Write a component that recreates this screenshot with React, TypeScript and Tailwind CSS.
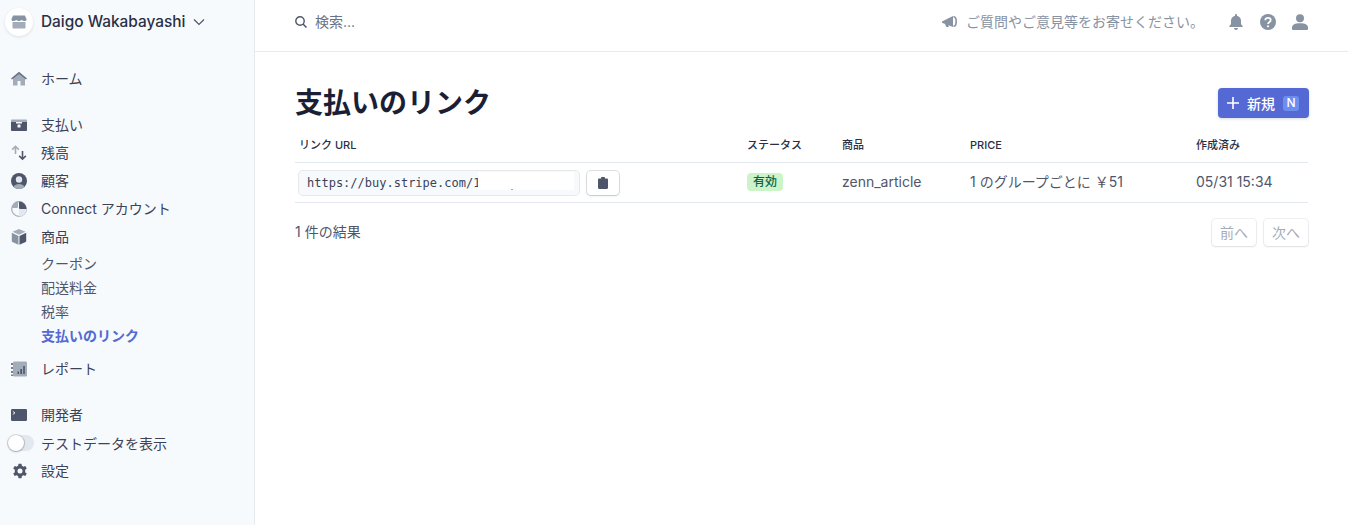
import React from "react";

const font = { fontFamily: '"Inter", "Noto Sans CJK JP", sans-serif' };

function Row({ icon, label, cls = "" }: { icon: React.ReactNode; label: string; cls?: string }) {
  return (
    <div className={`flex h-[28px] items-center ${cls}`}>
      <div className="flex w-[41px] shrink-0 items-center justify-start pl-[11px]">{icon}</div>
      <span className="text-[14px] leading-[20px] text-[#3c4257]">{label}</span>
    </div>
  );
}

function Sub({ label, active }: { label: string; active?: boolean }) {
  return (
    <div className={`flex h-[24px] items-center pl-[41px] text-[14px] ${active ? "font-bold text-[#5469d4]" : "text-[#4f566b]"}`}>
      {label}
    </div>
  );
}

const Home = () => (
  <svg width="16" height="16" viewBox="0 0 16 16"><path fill="#a3acb9" d="M8 2 2 7v7.500h4.500V10h3v4.500H14V7z" /><path fill="#697386" d="M8 .8 0 7.400l1 1.200L8 2.900l7 5.700 1-1.200z" /></svg>
);
const Payments = () => (
  <svg width="16" height="16" viewBox="0 0 16 16"><path fill="#a3acb9" d="M0 3.500C0 3 .4 2.500 1 2.500h14c.6 0 1 .5 1 1V5H0z" /><path fill="#4f566b" d="M0 5h5v1.500h6V5h5v8c0 .6-.4 1-1 1H1c-.6 0-1-.4-1-1z" /><rect fill="#f7fafc" x="6.500" y="7.500" width="3" height="3" rx=".5" /></svg>
);
const Balance = () => (
  <svg width="16" height="16" viewBox="0 0 16 16"><path fill="none" stroke="#a3acb9" strokeWidth="1.600" d="M4.500 9V1.500M1.200 4.600 4.500 1.300l3.300 3.300" /><path fill="none" stroke="#4f566b" strokeWidth="1.600" d="M11.500 6v8M8.200 10.900l3.300 3.300 3.300-3.300" /></svg>
);
const Customers = () => (
  <svg width="16" height="16" viewBox="0 0 16 16"><circle cx="8" cy="8" r="8" fill="#4f566b" /><path fill="#a3acb9" d="M2.600 13.900C3.600 11.900 5.600 11 8 11s4.400.9 5.400 2.900A8 8 0 0 1 8 16a8 8 0 0 1-5.400-2.100z" /><circle cx="8" cy="6.500" r="3.200" fill="#e3e8ee" /></svg>
);
const Connect = () => (
  <svg width="16" height="16" viewBox="0 0 16 16"><circle cx="8" cy="8" r="7.300" fill="#f7fafc" stroke="#a3acb9" strokeWidth="1.200" /><path fill="#e3e8ee" d="M8 8h7.500A7.500 7.500 0 0 1 8 15.500z" /><path fill="#4f566b" d="M8 .5A7.500 7.500 0 0 1 15.500 8H9a1 1 0 0 1-1-1z" /><path fill="#a3acb9" d="M1 7a7.500 7.500 0 0 1 6-6.400V6a1 1 0 0 1-1 1z" /></svg>
);
const Products = () => (
  <svg width="16" height="16" viewBox="0 0 16 16"><path fill="#a3acb9" d="M8 0 1.500 2.800l6.500 3 6.500-3z" /><path fill="#8792a2" d="M.8 3.800 7.500 6.900v8.900L1.400 13c-.4-.2-.6-.5-.6-.9z" /><path fill="#4f566b" d="M15.200 3.800 8.500 6.900v8.900l6.100-2.800c.4-.2.6-.5.6-.9z" /></svg>
);
const Reports = () => (
  <svg width="16" height="16" viewBox="0 0 16 16"><rect x="2" y="0.500" width="14" height="15" rx="1.200" fill="#a3acb9" /><path fill="#4f566b" d="M0 2h2v2H0zM0 6h2v2H0zM0 10h2v2H0zM0 13.500h2v1.500H0z" opacity=".75" /><path fill="#4f566b" d="M6.500 10.500H8V13H6.500zM9.300 8H11v5H9.300zM12.200 5h1.600v8h-1.600z" /></svg>
);
const Dev = () => (
  <svg width="16" height="12" viewBox="0 0 16 12"><rect width="16" height="12" rx="1.200" fill="#4f566b" /><path fill="none" stroke="#e3e8ee" strokeWidth="1" d="M1.800 2.400 4 3.900 1.800 5.400" /></svg>
);
const Gear = () => (
  <svg width="16" height="16" viewBox="0 0 24 24" className="ml-[1px]"><path fill="#4f566b" d="M14.200 1h-4.400l-.6 3.300a8.500 8.500 0 0 0-2 1.200L4 4.400 1.800 8.200l2.500 2.100a8.600 8.600 0 0 0 0 3.400l-2.500 2.100L4 19.600l3.200-1.100a8.500 8.500 0 0 0 2 1.200l.6 3.300h4.400l.6-3.300a8.500 8.500 0 0 0 2-1.200l3.200 1.100 2.200-3.800-2.500-2.100a8.600 8.600 0 0 0 0-3.400l2.500-2.100L20 4.400l-3.200 1.100a8.500 8.500 0 0 0-2-1.200zM12 8.200a3.800 3.800 0 1 1 0 7.600 3.800 3.800 0 0 1 0-7.600z" /></svg>
);

function Sidebar() {
  return (
    <aside className="flex w-[255px] shrink-0 flex-col border-r border-[#e6e9ee] bg-[#f7fafc] pt-[8px]">
      <div className="flex h-[28px] items-center pl-[5px]">
        <div className="flex h-[28px] w-[28px] items-center justify-center rounded-full bg-white shadow-[0_1px_3px_rgba(60,66,87,0.14)]">
          <svg width="16" height="16" viewBox="0 0 16 16"><path fill="#a3acb9" d="M1.500 8h13v5.500c0 .6-.4 1-1 1h-11c-.6 0-1-.4-1-1z" /><path fill="#8792a2" d="M2.500 1.500h11c.3 0 .5.2.6.4L15.500 5v.5C15.500 6.600 14.600 7 13.400 7c-1 0-1.800-.4-2.700-.9C9.800 6.600 9 7 8 7s-1.800-.4-2.700-.9C4.400 6.600 3.600 7 2.600 7 1.400 7 .5 6.600.5 5.500V5L1.900 1.900c.1-.2.300-.4.600-.4z" /></svg>
        </div>
        <span className="ml-[8px] text-[15.4px] font-medium leading-[28px] text-[#2a2f45]">Daigo Wakabayashi</span>
        <svg width="12" height="8" viewBox="0 0 12 8" className="ml-[8px]"><path fill="none" stroke="#4f566b" strokeWidth="1.200" d="M1 1.500 6 6.500l5-5" /></svg>
      </div>
      <Row cls="mt-[29px]" icon={<Home />} label="ホーム" />
      <Row cls="mt-[18px]" icon={<Payments />} label="支払い" />
      <Row icon={<Balance />} label="残高" />
      <Row icon={<Customers />} label="顧客" />
      <Row icon={<Connect />} label="Connect アカウント" />
      <Row icon={<Products />} label="商品" />
      <div>
        <Sub label="クーポン" />
        <Sub label="配送料金" />
        <Sub label="税率" />
        <Sub label="支払いのリンク" active />
      </div>
      <Row cls="mt-[8px]" icon={<Reports />} label="レポート" />
      <Row cls="mt-[18px]" icon={<Dev />} label="開発者" />
      <div className="flex h-[28px] items-center">
        <div className="ml-[8px] h-[16px] w-[26px] rounded-full bg-[#e3e8ee]">
          <div className="h-[16px] w-[16px] rounded-full bg-white shadow-[0_0_0_1px_rgba(60,66,87,0.2),0_1px_2px_rgba(60,66,87,0.3)]" />
        </div>
        <span className="ml-[7px] text-[14px] text-[#3c4257]">テストデータを表示</span>
      </div>
      <Row icon={<Gear />} label="設定" />
    </aside>
  );
}

function TopBar() {
  return (
    <header className="flex h-[52px] shrink-0 items-center border-b border-[#e6e9ee] pl-[40px] pr-[40px] pb-[7px]">
      <svg width="12" height="12" viewBox="0 0 12 12"><circle cx="5" cy="5" r="4.200" fill="none" stroke="#4f566b" strokeWidth="1.400" /><path stroke="#4f566b" strokeWidth="1.500" d="m8 8 3.500 3.500" /></svg>
      <span className="ml-[8px] -translate-y-[1px] text-[14px] text-[#697386]">検索...</span>
      <div className="ml-auto flex items-center">
        <svg width="16" height="14" viewBox="0 0 16 14"><path fill="#8792a2" d="M0 6.500 11 1v11L0 7.800z" /><path fill="#8792a2" d="M3 8.500h3l.8 3.500H4.200z" /><path fill="none" stroke="#8792a2" strokeWidth="1.600" d="M11.500 1.800c3.600 0 3.600 9.400 0 9.400" /></svg>
        <span className="ml-[8px] -translate-y-[1px] text-[14px] text-[#8792a2]">ご質問やご意見等をお寄せください。</span>
        <svg width="16" height="16" viewBox="0 0 16 16" className="ml-[24px]"><path fill="#8792a2" d="M8 0a1 1 0 0 1 1 1v.8c2.300.5 4 2.500 4 4.900V10l1.700 2.300c.2.300 0 .7-.4.700H1.700c-.4 0-.6-.4-.4-.7L3 10V6.700c0-2.400 1.700-4.400 4-4.900V1a1 1 0 0 1 1-1zM6 14h4a2 2 0 0 1-4 0z" /></svg>
        <svg width="16" height="16" viewBox="0 0 16 16" className="ml-[16px]"><circle cx="8" cy="8" r="8" fill="#8792a2" /><path fill="none" stroke="#fff" strokeWidth="1.800" d="M5.300 6.200C5.300 4.700 6.500 3.800 8 3.800s2.700.9 2.700 2.300c0 2.100-2.700 2.100-2.700 3.900" /><circle cx="8" cy="12.300" r="1.100" fill="#fff" /></svg>
        <svg width="16" height="16" viewBox="0 0 16 16" className="ml-[16px]"><circle cx="8" cy="4.200" r="4" fill="#8792a2" /><path fill="#8792a2" d="M0 13.500C0 10.800 3 9.300 8 9.300s8 1.500 8 4.200V15a1 1 0 0 1-1 1H1a1 1 0 0 1-1-1z" /></svg>
      </div>
    </header>
  );
}

const headCls = "text-[11px] font-medium leading-[16px] text-[#2a2f45]";
const cellCls = "pb-[3px] text-[14px] text-[#4f566b]";
const pageBtn = "flex h-[27px] w-[44px] items-center justify-center rounded-[4px] bg-white text-[14px] text-[#a3acb9] shadow-[0_0_0_1px_rgba(60,66,87,0.08),0_1px_2px_rgba(60,66,87,0.1)]";

export default function App() {
  return (
    <div className="flex h-[525px] w-[1348px] overflow-hidden bg-white" style={font}>
      <Sidebar />
      <div className="flex min-w-0 flex-1 flex-col">
        <TopBar />
        <main className="pl-[40px] pr-[39px]">
          <div className="flex h-[66px] items-start justify-between pt-[36px]">
            <h1 className="text-[28px] font-bold leading-[30px] text-[#1a1f36]">支払いのリンク</h1>
            <button className="flex h-[30px] w-[91px] items-center rounded-[4px] bg-[#5469d4] pl-[9px] text-[14px] font-medium text-white shadow-[0_1px_3px_rgba(60,66,87,0.2)]">
              <svg width="12" height="12" viewBox="0 0 12 12"><path stroke="#fff" strokeWidth="1.600" d="M6 0v12M0 6h12" /></svg>
              <span className="ml-[8px]">新規</span>
              <span className="ml-[8px] flex h-[15px] w-[16px] items-center justify-center rounded-[3px] bg-[#6c8eef] text-[12px] font-medium leading-none">N</span>
            </button>
          </div>
          <div className="mr-[1px] grid h-[45px] grid-cols-[452px_95px_128px_226px_1fr] items-center border-b border-[#e3e8ee] pt-[10px]">
            <span className={`${headCls} pl-[4px]`}>リンク URL</span>
            <span className={headCls}>ステータス</span>
            <span className={headCls}>商品</span>
            <span className={headCls}>PRICE</span>
            <span className={headCls}>作成済み</span>
          </div>
          <div className="mr-[1px] grid h-[40px] grid-cols-[452px_95px_128px_226px_1fr] items-center border-b border-[#e3e8ee]">
            <div className="flex items-center pl-[4px]">
              <div className="relative h-[24px] w-[280px] rounded-[4px] bg-[#f7fafc] pl-[8px] text-[12px] leading-[24px] text-[#3c4257] shadow-[0_0_0_1px_rgba(60,66,87,0.12)]" style={{ fontFamily: '"DejaVu Sans Mono", "Liberation Mono", monospace' }}>
                https://buy.stripe.com/1
                <div className="absolute left-[179px] top-[1px] h-[18px] w-[96px] bg-white" />
                <div className="absolute left-[212px] top-[18px] h-[1px] w-[2px] bg-[#a3acb9]" />
              </div>
              <button className="ml-[8px] flex h-[24px] w-[32px] items-center justify-center rounded-[4px] bg-white shadow-[0_0_0_1px_rgba(60,66,87,0.16),0_1px_2px_rgba(60,66,87,0.16)]">
                <svg width="10" height="12" viewBox="0 0 10 12"><path fill="#4f566b" d="M3.200 0h3.600v1.500H8.800c.7 0 1.200.5 1.200 1.200V10.800c0 .7-.5 1.200-1.200 1.200H1.200C.5 12 0 11.500 0 10.800V2.700C0 2 .5 1.500 1.200 1.500h2z" /></svg>
              </button>
            </div>
            <div className="flex pb-[2px]">
              <span className="flex h-[18px] w-[36px] items-center justify-center rounded-[4px] bg-[#cbf4c9] text-[12px] font-medium text-[#0e6245]">有効</span>
            </div>
            <span className={cellCls}>zenn_article</span>
            <span className={cellCls}>1 のグループごとに ￥51</span>
            <span className={cellCls}>05/31 15:34</span>
          </div>
          <div className="flex items-center justify-between pt-[16px]">
            <span className="-translate-y-[1px] text-[14px] text-[#4f566b]">1 件の結果</span>
            <div className="mr-[1px] flex gap-[8px]">
              <div className={pageBtn}>前へ</div>
              <div className={pageBtn}>次へ</div>
            </div>
          </div>
        </main>
      </div>
    </div>
  );
}
